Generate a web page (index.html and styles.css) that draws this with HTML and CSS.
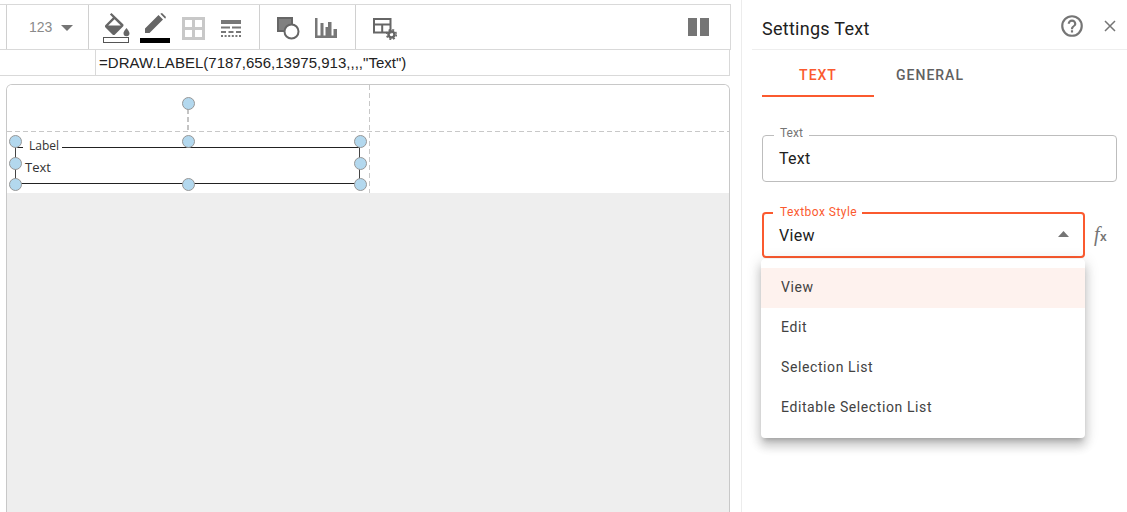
FILE: index.html
```html
<!DOCTYPE html>
<html lang="en">
<head>
<meta charset="utf-8">
<title>Settings Text</title>
<link rel="stylesheet" href="styles.css">
</head>
<body>
<div class="app">
  <main class="workspace">
    <div class="toolbar">
      <div class="tb-group g-first"></div>
      <div class="tb-group g-num"><span class="num">123</span><svg class="caret" width="12" height="6" viewBox="0 0 12 6"><path d="M0 0h12L6 6z"/></svg></div>
      <div class="tb-group g-format">
        <svg class="ic" width="30" height="32" viewBox="0 0 30 32"><path d="M8.500 0L6.900 1.600l3 3-7.400 7.400c-.7.7-.7 1.800 0 2.500l7 7c.7.7 1.800.7 2.500 0l8-8c.7-.7.7-1.800 0-2.500z" fill="#666"/><path d="M11.500 6.300l6.300 6.300H5.200z" fill="#fff"/><path d="M23.500 15s-3 3.300-3 5.300a3 3 0 0 0 6 0c0-2-3-5.300-3-5.300z" fill="#666"/><rect x=".5" y="24.500" width="25" height="5" fill="#fff" stroke="#555"/></svg>
        <svg class="ic" width="30" height="32" viewBox="0 0 30 32"><path d="M5 20v-4.500L18.500 2 23 6.500 9.500 20zM20.300 .8L22 0l4 4-.8 1.700z" fill="#666"/><rect y="25" width="30" height="5" fill="#000"/></svg>
        <svg class="ic" width="23" height="23" viewBox="0 0 23 23"><path d="M0 0h23v23H0zM3 3v7h7V3zm10 0v7h7V3zM3 13v7h7v-7zm10 0v7h7v-7z" fill="#c8c8c8"/></svg>
        <svg class="ic" width="20" height="17" viewBox="0 0 20 17"><path d="M0 0h20v4H0zM0 6.500h9v2H0zM11 6.500h9v2h-9zM0 11h5v2H0zM7.500 11h5v2h-5zM15 11h5v2h-5zM0 15h2v2H0zM3.600 15h2v2h-2zM7.200 15h2v2h-2zM10.800 15h2v2h-2zM14.400 15h2v2h-2zM18 15h2v2h-2z" fill="#777"/></svg>
      </div>
      <div class="tb-group g-insert">
        <svg class="ic" width="24" height="23" viewBox="0 0 24 23"><path d="M1 1h14v13H1z" fill="#808080" stroke="#666" stroke-width="2"/><circle cx="14.500" cy="14.500" r="7" fill="#fff" stroke="#666" stroke-width="2"/></svg>
        <svg class="ic" width="22" height="20" viewBox="0 0 22 20"><path d="M0 0h2.500v17.500H22V20H0zM5.500 5h3v12.500h-3zM10.500 9h2.500v8.500h-2.500zM13 4h3.500v13.500H13zM18.500 11H22v6.500h-3.500z" fill="#777"/></svg>
      </div>
      <div class="tb-group g-table">
        <svg class="ic" width="24" height="22" viewBox="0 0 24 22"><path d="M1 1h16.500v13.500H1zM1 6.500h16.500M9.200 6.500v8" fill="none" stroke="#666" stroke-width="2"/><circle cx="18.500" cy="16.500" r="3" fill="none" stroke="#666" stroke-width="2.500"/><circle cx="18.500" cy="16.500" r="4.800" fill="none" stroke="#666" stroke-width="1.500" stroke-dasharray="2 1.800"/></svg>
      </div>
      <div class="tb-end"><span class="pause"></span><span class="pause"></span></div>
    </div>
    <div class="formula">
      <div class="name-box"></div>
      <div class="formula-text">=DRAW.LABEL(7187,656,13975,913,,,,"Text")</div>
    </div>
    <div class="sheet">
      <div class="canvas">
        <div class="guide-h"></div>
        <div class="guide-v"></div>
        <div class="guide-stem"></div>
        <div class="box-top"></div>
        <div class="box-bottom"></div>
        <div class="box-left"></div>
        <div class="box-right"></div>
        <span class="box-label">Label</span>
        <span class="box-text">Text</span>
        <span class="handle h-rot"></span>
        <span class="handle h-tl"></span><span class="handle h-tc"></span><span class="handle h-tr"></span>
        <span class="handle h-ml"></span><span class="handle h-mr"></span>
        <span class="handle h-bl"></span><span class="handle h-bc"></span><span class="handle h-br"></span>
      </div>
      <div class="empty"></div>
    </div>
  </main>
  <aside class="panel">
    <header class="panel-head">
      <h1 class="panel-title">Settings Text</h1>
      <svg class="help" width="26" height="26" viewBox="0 0 24 24"><path d="M11 18h2v-2h-2zm1-16a10 10 0 1 0 0 20 10 10 0 0 0 0-20zm0 18a8 8 0 1 1 0-16 8 8 0 0 1 0 16zm0-14a4 4 0 0 0-4 4h2a2 2 0 1 1 4 0c0 2-3 1.750-3 5h2c0-2.250 3-2.500 3-5a4 4 0 0 0-4-4z" fill="#757575"/></svg>
      <svg class="close" width="12" height="12" viewBox="0 0 12 12"><path d="M1 1l10 10M11 1L1 11" stroke="#757575" stroke-width="1.500" fill="none"/></svg>
    </header>
    <nav class="tabs">
      <span class="tab tab-active">TEXT</span>
      <span class="tab">GENERAL</span>
    </nav>
    <div class="field field-text">
      <span class="legend">Text</span>
      <span class="value">Text</span>
    </div>
    <div class="select-row">
      <div class="field field-select">
        <span class="legend legend-active">Textbox Style</span>
        <span class="value">View</span>
        <svg class="select-caret" width="11" height="6" viewBox="0 0 11 6"><path d="M5.500 0L11 6H0z" fill="#757575"/></svg>
      </div>
      <span class="fx"><i>f</i><small>x</small></span>
    </div>
    <ul class="menu">
      <li class="menu-item menu-selected">View</li>
      <li class="menu-item">Edit</li>
      <li class="menu-item">Selection List</li>
      <li class="menu-item">Editable Selection List</li>
    </ul>
  </aside>
</div>
</body>
</html>
```
FILE: styles.css
```css
* { box-sizing: border-box; }
html, body { margin: 0; height: 100%; background: #fff; overflow: hidden; }
body { font-family: Roboto, "Liberation Sans", sans-serif; color: #212121; }
.app { display: flex; height: 512px; overflow: hidden; }

.workspace { width: 741px; flex: none; padding-top: 4px; }

.toolbar {
  display: flex; height: 46px; width: 731px;
  border-top: 1px solid #d9d9d9; border-bottom: 1px solid #d9d9d9; border-right: 1px solid #d9d9d9;
}
.tb-group { display: flex; align-items: center; border-right: 1px solid #d0d0d0; height: 44px; }
.g-first { width: 7px; }
.g-num { width: 82px; padding-left: 22px; gap: 6px; }
.num { font: 14px "Liberation Sans", sans-serif; color: #8a8a8a; width: 24px; margin-bottom: 1px; }
.caret { fill: #757575; margin-top: 1px; margin-left: 2px; }
.g-format { width: 171px; padding-left: 14px; gap: 7px; }
.g-format .ic:nth-child(1) { margin-top: 4px; }
.g-format .ic:nth-child(2) { margin-top: 4px; }
.g-format .ic:nth-child(3) { margin-left: 5px; margin-top: 2px; }
.g-format .ic:nth-child(4) { margin-left: 9px; margin-top: 2px; }
.g-insert { width: 96px; padding-left: 17px; gap: 14px; }
.g-insert .ic:nth-child(1) { margin-top: 2px; }
.g-insert .ic:nth-child(2) { margin-top: 1px; }
.g-table { width: 0; flex: 1; border-right: 0; padding-left: 17px; }
.g-table .ic { margin-top: 3px; }
.tb-end { display: flex; gap: 3px; align-items: center; padding-right: 21px; }
.pause { width: 9px; height: 18px; background: #757575; display: block; }

.formula {
  display: flex; height: 26px; width: 730px;
  border-bottom: 1px solid #d9d9d9; border-right: 1px solid #d9d9d9;
}
.name-box { width: 96px; border-right: 1px solid #d9d9d9; }
.formula-text { font: 15px/25px "Liberation Sans", sans-serif; color: #222; padding-left: 3px; letter-spacing: .02px; }

.sheet {
  margin: 8px 0 0 6px; width: 724px; height: 428px;
  border: 1px solid #c8c8c8; border-bottom: 0; border-radius: 6px 6px 0 0; overflow: hidden;
  display: flex; flex-direction: column;
}
.canvas { position: relative; height: 108px; background: #fff; flex: none; }
.empty { flex: 1; background: #eeeeee; }

.guide-h {
  position: absolute; left: 0; right: 0; top: 46px; height: 1px;
  background: repeating-linear-gradient(90deg, #c8c8c8 0 5px, transparent 5px 8px);
}
.guide-v {
  position: absolute; left: 362px; top: 0; bottom: 0; width: 1px;
  background: repeating-linear-gradient(180deg, #c8c8c8 0 5px, transparent 5px 8px);
}
.guide-stem {
  position: absolute; left: 180px; top: 24px; height: 24px; width: 2px;
  background: repeating-linear-gradient(180deg, #c4c4c4 0 5px, transparent 5px 8px);
}
.box-top { position: absolute; left: 55px; width: 298px; top: 62px; border-top: 1px solid #222; }
.box-bottom { position: absolute; left: 8px; width: 345px; top: 98px; border-top: 1px solid #222; }
.box-left { position: absolute; left: 8px; top: 62px; height: 37px; border-left: 1px solid #444; }
.box-right { position: absolute; left: 352px; top: 62px; height: 37px; border-left: 1px solid #444; }
.box-top::before { content: ""; position: absolute; left: -45px; top: -1px; width: 6px; border-top: 1px solid #222; }
.box-label, .box-text { position: absolute; font: 13px/16px "Open Sans", "DejaVu Sans", sans-serif; color: #333; }
.box-label { left: 22px; top: 53px; font-size: 12px; }
.box-text { left: 18px; top: 74px; }
.handle {
  position: absolute; width: 13px; height: 13px; border-radius: 50%;
  background: #b3d8ee; border: 1px solid #979797;
}
.h-rot { left: 175px; top: 12px; }
.h-tl { left: 2px; top: 50px; }
.h-tc { left: 175px; top: 50px; }
.h-tr { left: 347px; top: 50px; }
.h-ml { left: 2px; top: 72px; }
.h-mr { left: 347px; top: 72px; }
.h-bl { left: 2px; top: 93px; }
.h-bc { left: 175px; top: 93px; }
.h-br { left: 347px; top: 93px; }

.panel { flex: 1; border-left: 1px solid #ececec; padding-left: 10px; position: relative; }
.panel-head {
  display: flex; align-items: center; height: 50px; border-bottom: 1px solid #eeeeee;
  padding: 7px 0 0 10px;
}
.panel-title { font-size: 18px; font-weight: 400; margin: 0; flex: 1; letter-spacing: .27px; color: #212121; }
.help { margin-right: 19px; margin-top: -4px; }
.close { margin-right: 11px; margin-top: -4px; }

.tabs { display: flex; margin-left: 10px; height: 47px; }
.tab {
  width: 112px; text-align: center; font-size: 14px; font-weight: 500; letter-spacing: 1px;
  color: #616161; line-height: 50px; height: 47px;
}
.tab-active { color: #fb5a2f; border-bottom: 2px solid #fb5a2f; }

.field { position: relative; border-radius: 4px; display: flex; align-items: center; padding-left: 16px; }
.field-text {
  margin: 38px 10px 0 10px; height: 47px; border: 1px solid #bdbdbd;
}
.select-row { display: flex; align-items: center; margin: 30px 0 0 10px; }
.field-select { width: 323px; height: 46px; border: 2px solid #fb5a2f; padding-left: 15px; flex: none; }
.value { font-size: 16px; color: #212121; letter-spacing: .3px; }
.legend {
  position: absolute; left: 11px; top: -11px; background: #fff; padding: 0 6px;
  font-size: 12px; line-height: 16px; color: #757575;
}
.legend-active { color: #fb5a2f; left: 9px; top: -10px; letter-spacing: .45px; padding: 0 5px 0 7px; }
.select-caret { position: absolute; right: 14px; top: 17px; }
.fx { margin-left: 9px; color: #757575; font: 20px/20px "Liberation Serif", serif; margin-top: -3px; letter-spacing: .5px; }
.fx small { font: 700 12px "Liberation Sans", sans-serif; }

.menu {
  position: absolute; left: 19px; top: 259px; width: 324px; height: 179px; margin: 0; padding: 9px 0 0;
  list-style: none; background: #fff; border-radius: 4px;
  box-shadow: 0 5px 5px -3px rgba(0,0,0,.2), 0 8px 10px 1px rgba(0,0,0,.14), 0 3px 14px 2px rgba(0,0,0,.12);
}
.menu-item { height: 40px; line-height: 38px; padding-left: 20px; font-size: 14px; color: #424242; letter-spacing: .6px; }
.menu-selected { background: #fef2ee; }
```
